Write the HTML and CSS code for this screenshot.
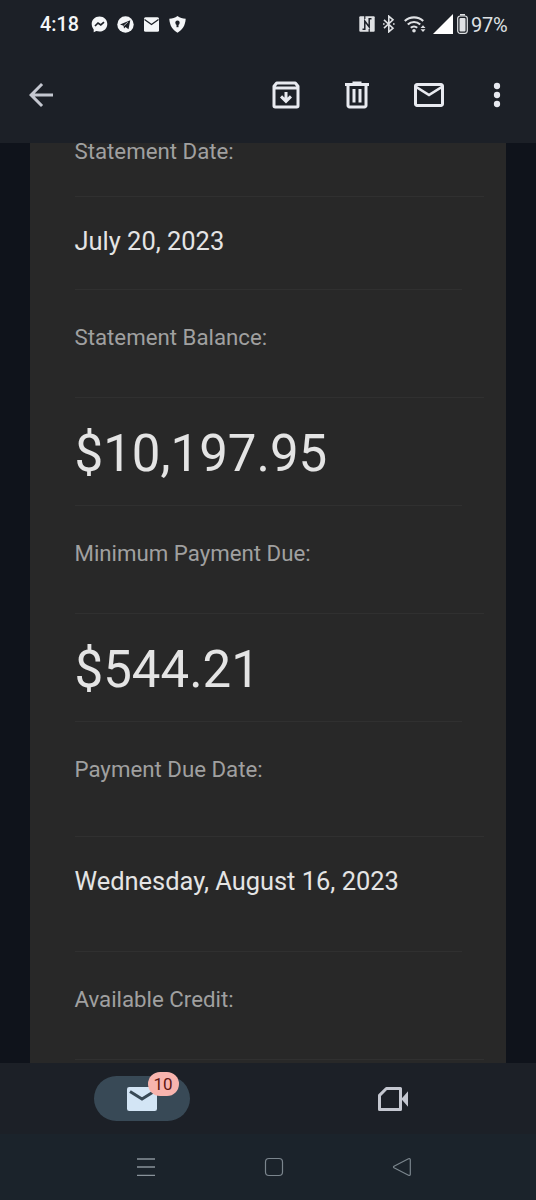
FILE: index.html
```html
<!DOCTYPE html>
<html lang="en">

<head>
    <meta charset="UTF-8">
    <meta name="viewport" content="width=device-width, initial-scale=1.0">
    <title>Statement</title>
    <link rel="stylesheet" href="styles.css">
</head>

<body>
    <div class="status-bar">
        <span class="time">4:18</span>
        <div class="notifications">
            <!-- messenger -->
            <svg width="17" height="17" viewBox="0 0 17 17">
                <path fill="#f4f6f8" d="M8.500.5C4 .5.7 3.800.7 8c0 2.200.9 4 2 5.400v2.900l2.600-1.200c1 .3 2.100.5 3.200.5 4.500 0 7.800-3.300 7.800-7.600S13 .5 8.500.5z" />
                <path fill="none" stroke="#1c2027" stroke-width="1.700" d="M4 10l3-3 2.800 2L13 6.200" />
            </svg>
            <!-- telegram -->
            <svg width="17" height="17" viewBox="0 0 17 17">
                <circle cx="8.500" cy="8.500" r="8.200" fill="#f4f6f8" />
                <path fill="#1c2027" d="M3 8.400l10.300-4.200-1.800 9-3-2.200-1.500 1.500-.5-2.800z" />
                <path stroke="#f4f6f8" stroke-width=".7" d="M6.800 9.800l4-3.600" />
            </svg>
            <!-- mail -->
            <svg width="17" height="17" viewBox="0 0 17 17">
                <rect x="1" y="1.200" width="15" height="14.500" rx="1.500" fill="#f4f6f8" />
                <path fill="none" stroke="#1c2027" stroke-width="1.300" d="M1.500 3.500l7 5 7-5" />
            </svg>
            <!-- shield -->
            <svg width="17" height="17" viewBox="0 0 17 17">
                <path fill="#f4f6f8" d="M8.500 0C6 1.800 3.500 2.500.3 2.800.7 9.500 3.500 14 8.500 16.800c5-2.800 7.800-7.300 8.200-14C13.500 2.500 11 1.800 8.500 0z" />
                <circle cx="8.500" cy="6.800" r="2.200" fill="#1c2027" />
                <path fill="#1c2027" d="M7.500 7h2v4.200h-2z" />
            </svg>
        </div>
        <div class="system">
            <!-- nfc -->
            <svg width="16" height="16" viewBox="0 0 16 16">
                <rect x=".3" y=".3" width="15.400" height="15.400" rx="1" fill="#dfe1e4" />
                <path fill="none" stroke="#1c2027" stroke-width="1.500" d="M3.500 13.200h2.300V5l4.400 6V2.800h2.300" />
                <path stroke="#1c2027" stroke-width="1.200" d="M5.800 0v3M10.200 13v3" />
            </svg>
            <!-- bluetooth -->
            <svg class="bluetooth" width="12" height="18" viewBox="0 0 12 18">
                <path fill="none" stroke="#dfe1e4" stroke-width="1.600" d="M1 4.800l9 8.400-4.200 3.600V1.200L10 4.800l-9 8.400" />
                <path stroke="#dfe1e4" stroke-width="1.600" d="M0 9h1.600M10 9h1.600" />
            </svg>
            <!-- wifi -->
            <svg class="wifi" width="22" height="18" viewBox="0 0 22 18">
                <g fill="none" stroke="#dfe1e4" stroke-width="2.200">
                    <path d="M.8 6a13.500 13.500 0 0 1 18.400 0" />
                    <path d="M3.800 9.500a9 9 0 0 1 12.400 0" />
                    <path d="M6.800 12.800a4.800 4.800 0 0 1 6.400 0" />
                </g>
                <circle cx="10" cy="15.700" r="1.800" fill="#dfe1e4" />
                <path fill="#dfe1e4" d="M16.500 13l2.500-2.800 2.500 2.800zM16.500 14.200h5L19 17z" />
            </svg>
            <!-- signal -->
            <svg class="signal" width="20" height="20" viewBox="0 0 20 20">
                <path fill="#fff" d="M20 0v20H0z" />
            </svg>
            <!-- battery -->
            <svg class="battery" width="11" height="20" viewBox="0 0 11 20">
                <path fill="#dfe1e4" d="M3 0h5v1.500H3z" />
                <rect x=".7" y="2" width="9.600" height="17.300" rx="2.500" fill="none" stroke="#dfe1e4" stroke-width="1.200" />
                <rect x="2.500" y="4" width="6" height="13.500" rx="1" fill="#dfe1e4" />
            </svg>
            <span class="percent">97%</span>
        </div>
    </div>

    <div class="toolbar">
        <svg class="icon" viewBox="0 0 24 24">
            <path fill="#c4c7d0" d="M20 11H7.830l5.590-5.590L12 4l-8 8 8 8 1.410-1.410L7.830 13H20z" />
        </svg>
        <div class="actions">
            <!-- archive -->
            <svg class="icon" viewBox="0 0 24 24">
                <path fill="none" stroke="#e8eaf0" stroke-width="2" stroke-linejoin="round" d="M4 7v12.200q0 .8.8.8h14.400q.8 0 .8-.8V6.200L18.200 4H5.800L4 6.200zM4 7.300h16" />
                <path fill="none" stroke="#e8eaf0" stroke-width="2" d="M12 10v6M8.700 12.900l3.300 3.300 3.300-3.300" />
            </svg>
            <!-- delete -->
            <svg class="icon" viewBox="0 0 24 24">
                <path fill="#e8eaf0" d="M15 4V3H9v1H4v2h1v13c0 1.100.9 2 2 2h10c1.100 0 2-.9 2-2V6h1V4h-5zm2 15H7V6h10v13zM9 8h2v9H9zm4 0h2v9h-2z" />
            </svg>
            <!-- mark unread -->
            <svg class="icon" viewBox="0 0 24 24">
                <path fill="#e8eaf0" d="M22 6c0-1.100-.9-2-2-2H4c-1.100 0-2 .9-2 2v12c0 1.100.9 2 2 2h16c1.100 0 2-.9 2-2V6zm-2 0l-8 5-8-5h16zm0 12H4V8l8 5 8-5v10z" />
            </svg>
            <!-- more -->
            <svg class="icon more" viewBox="0 0 24 24">
                <g fill="#e8eaf0">
                    <circle cx="12" cy="6" r="2.100" />
                    <circle cx="12" cy="12" r="2.100" />
                    <circle cx="12" cy="18" r="2.100" />
                </g>
            </svg>
        </div>
    </div>

    <div class="content">
        <div class="card">
            <div class="row label first">Statement Date:</div>
            <div class="row value date">July 20, 2023</div>
            <div class="row label">Statement Balance:</div>
            <div class="row value amount">$10,197.95</div>
            <div class="row label">Minimum Payment Due:</div>
            <div class="row value amount">$544.21</div>
            <div class="row label tall">Payment Due Date:</div>
            <div class="row value date tall">Wednesday, August 16, 2023</div>
            <div class="row label">Available Credit:</div>
        </div>
    </div>

    <div class="bottom-nav">
        <div class="tab">
            <div class="pill">
                <svg class="icon" viewBox="0 0 24 24">
                    <rect x="2" y="4" width="20" height="16" rx="1.500" fill="#d3e5f5" />
                    <path fill="none" stroke="#384956" stroke-width="2" d="M4 7l8 5 8-5" />
                </svg>
                <span class="badge">10</span>
            </div>
        </div>
        <div class="tab">
            <!-- meet -->
            <svg class="icon" viewBox="0 0 24 24">
                <path fill="none" stroke="#c4c7d0" stroke-width="2" stroke-linejoin="round" d="M7.600 5H17v14H3V9.600z" />
                <path fill="#c4c7d0" d="M17.500 12L22 6.800v10.400z" />
            </svg>
        </div>
    </div>

    <div class="system-nav">
        <svg width="20" height="20" viewBox="0 0 20 20">
            <path stroke="#89929a" stroke-width="1.300" d="M1 2h18M1 10h18M1 18.300h18" />
        </svg>
        <svg width="20" height="20" viewBox="0 0 20 20">
            <rect x="1.500" y="1.500" width="17" height="17" rx="3.500" fill="none" stroke="#7b858d" stroke-width="1.200" />
        </svg>
        <svg width="20" height="20" viewBox="0 0 20 20">
            <path fill="none" stroke="#7b858d" stroke-width="1.200" stroke-linejoin="round" d="M2 9.200L16.500 1.700q1.800-.6 1.800 1.100v14.400q0 1.700-1.800 1.100L2 10.800q-1-.8 0-1.600z" />
        </svg>
    </div>
</body>

</html>
```
FILE: styles.css
```css
* {
    box-sizing: border-box;
}

body {
    margin: 0;
    height: 1200px;
    display: flex;
    flex-direction: column;
    overflow: hidden;
    background-color: #0f131b;
    font-family: Roboto, "Liberation Sans", sans-serif;
}

svg {
    display: block;
    flex: none;
}

.icon {
    width: 36px;
    height: 36px;
}

.status-bar {
    height: 48px;
    padding: 0 27px 0 40px;
    display: flex;
    align-items: center;
    background-color: #1c2027;
    color: #f4f6f8;
}

.time {
    width: 51px;
    padding-top: 1px;
    font-size: 19.8px;
    font-weight: 500;
}

.notifications {
    display: flex;
    gap: 9px;
}

.system {
    margin-left: auto;
    display: flex;
    align-items: center;
}

.bluetooth {
    margin-left: 8px;
}

.wifi {
    margin-left: 9px;
}

.signal {
    margin-left: 7px;
}

.battery {
    margin-left: 4px;
}

.percent {
    width: 38px;
    margin-left: 3px;
    padding-top: 1px;
    color: #dfe1e4;
    font-size: 20px;
    letter-spacing: -0.2px;
}

.toolbar {
    height: 95px;
    padding: 0 21px 1px 23px;
    display: flex;
    align-items: center;
    justify-content: space-between;
    background-color: #1c2027;
}

.actions {
    display: flex;
    gap: 35.5px;
}

.more {
    margin-left: -3px;
}

.content {
    height: 920px;
    padding: 0 30px;
}

.card {
    height: 920px;
    padding-left: 44.5px;
    background-color: #282828;
}

.row {
    height: 108px;
    border-bottom: 1px solid #303030;
    white-space: nowrap;
}

.label {
    width: 409px;
    padding-top: 34px;
    color: #a0a0a0;
    font-size: 22.25px;
    line-height: 26px;
}

.value {
    width: 387px;
    color: #e4e4e4;
}

.date {
    height: 93px;
    padding-top: 29px;
    font-size: 25.45px;
    line-height: 30px;
}

.amount {
    padding-top: 26px;
    font-size: 51px;
    line-height: 60px;
}

.tall {
    height: 115px;
}

/* sits right under the toolbar */
.first {
    height: 54px;
    padding-top: 0;
    line-height: 16px;
}

.bottom-nav {
    height: 71px;
    display: flex;
    padding-left: 16px;
    background-color: #1c2027;
}

.tab {
    width: 251px;
    display: flex;
    align-items: center;
    justify-content: center;
}

.pill {
    position: relative;
    width: 96px;
    height: 45px;
    display: flex;
    align-items: center;
    justify-content: center;
    border-radius: 23px;
    background-color: #384956;
}

.badge {
    position: absolute;
    top: -4px;
    left: 54px;
    width: 31px;
    height: 24px;
    border-radius: 12px;
    background-color: #f8b4ae;
    color: #5f1613;
    font-size: 17px;
    line-height: 24px;
    text-align: center;
}

.system-nav {
    height: 66px;
    display: flex;
    align-items: center;
    justify-content: center;
    gap: 108px;
    padding-left: 12px;
    background-color: #1b232b;
}
```
